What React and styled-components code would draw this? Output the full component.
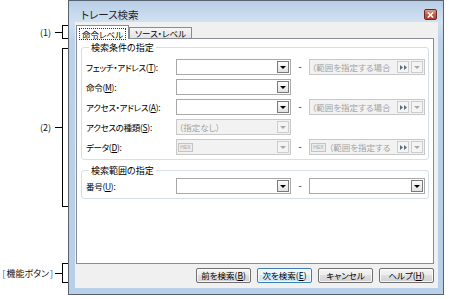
import React from 'react';
import styled, { createGlobalStyle } from 'styled-components';

const GlobalStyle = createGlobalStyle`
  html, body { margin: 0; padding: 0; background: #fff; }
  body {
    font-family: "Noto Sans CJK JP", "Noto Sans", sans-serif;
    font-size: 9px;
    color: #000;
    font-feature-settings: "palt";
  }
`;

const Page = styled.div`
  display: flex;
  align-items: flex-start;
  width: 474px;
  height: 299px;
`;

/* ---- callouts on the left ---- */

const Notes = styled.div`
  width: 68px;
  flex-shrink: 0;
  display: flex;
  flex-direction: column;
`;

const Note = styled.div`
  display: flex;
  align-items: center;
  height: ${({h}) => h}px;
  margin-top: ${({top}) => top}px;
`;

const NoteLabel = styled.span`
  flex: 1;
  text-align: right;
  padding-right: ${({pad}) => pad}px;
  line-height: 1;
  white-space: nowrap;
  color: #111;
`;

const BlueBracket = styled.span`
  color: #1f5fbf;
  margin: 0 1px;
`;

const Stub = styled.span`
  width: 7px;
  height: 1px;
  background: #000;
`;

const Bracket = styled.span`
  align-self: stretch;
  width: 5px;
  border: 1px solid #000;
  border-right: none;
`;

/* ---- dialog window ---- */

const Window = styled.div`
  box-sizing: border-box;
  width: 376px;
  height: 295px;
  border: 1px solid #5a6270;
  background: linear-gradient(to bottom, #b7cde7 0px, #d2e1f1 21px, #bcd2ea 40px, #b8cfe9 100%);
  padding: 0 5px 6px 6px;
  display: flex;
  flex-direction: column;
`;

const TitleBar = styled.div`
  height: 21px;
  box-sizing: border-box;
  padding: 6px 1px 0 6px;
  display: flex;
  align-items: center;
  justify-content: space-between;
`;

const Title = styled.span`
  font-size: 10.5px;
  line-height: 12px;
  color: #1e1e1e;
`;

const CloseButton = styled.span`
  width: 13px;
  height: 11px;
  box-sizing: border-box;
  border: 1px solid #6b2b22;
  border-radius: 2px;
  background: linear-gradient(#e0a08e, #c75a45 50%, #b8402c);
  display: flex;
  align-items: center;
  justify-content: center;
`;

const Client = styled.div`
  flex: 1;
  background: #f0f0f0;
  padding: 3px 4px 0 1px;
  display: flex;
  flex-direction: column;
`;

const TabStrip = styled.div`
  display: flex;
  align-items: flex-end;
  height: 14px;
  margin-bottom: -1px;
  position: relative;
  z-index: 1;
`;

const Tab = styled.div`
  box-sizing: border-box;
  height: ${({active}) => active ? 14 : 12}px;
  padding: ${({active}) => active ? '2px 2px 0' : '0 5px'};
  border: 1px solid #898c95;
  border-bottom: ${({active}) => active ? 'none' : '1px solid #898c95'};
  background: ${({active}) => active ? '#fff' : 'linear-gradient(#f6f6f6, #e3e3e3)'};
  display: flex;
  align-items: ${({active}) => active ? 'flex-start' : 'center'};
  line-height: 10px;
  font-size: 8.5px;
  white-space: nowrap;
`;

const FocusLabel = styled.span`
  border: 1px dotted #333;
  padding: 0 2px;
  height: 10px;
`;

const Panel = styled.div`
  box-sizing: border-box;
  height: 226px;
  border: 1px solid #898c95;
  background: #fff;
  padding: 3px 4px 0 4px;
  display: flex;
  flex-direction: column;
  gap: 5px;
`;

const Group = styled.fieldset`
  margin: 0;
  min-width: 0;
  border: 1px solid #d5dfe5;
  border-radius: 3px;
  padding: ${({pt}) => pt}px 3px 4px 4px;
  display: flex;
  flex-direction: column;
  gap: 4px;
`;

const Legend = styled.legend`
  margin-left: 3px;
  padding: 0 2px;
  line-height: 11px;
  font-size: 9px;
`;

const Row = styled.div`
  display: flex;
  align-items: center;
  height: 16px;
`;

const Label = styled.span`
  width: 90px;
  flex-shrink: 0;
  white-space: nowrap;
  line-height: 16px;
  font-size: 8.5px;
  letter-spacing: -0.3px;
`;

const Dash = styled.span`
  width: 18px;
  text-align: center;
  line-height: 16px;
`;

const Combo = styled.div`
  box-sizing: border-box;
  width: ${({w}) => w}px;
  height: 16px;
  padding: 1px;
  border: 1px solid ${({disabled}) => disabled ? '#c8c8c8' : '#a8a8a8'};
  background: ${({disabled}) => disabled ? '#f2f2f2' : '#fff'};
  display: flex;
  align-items: center;
  gap: 2px;
`;

const ComboText = styled.span`
  flex: 1;
  min-width: 0;
  padding-left: 1px;
  color: ${({disabled}) => disabled ? '#a3a3a3' : '#000'};
  white-space: nowrap;
  font-size: 8.5px;
  line-height: 12px;
`;

const HexBadge = styled.span`
  box-sizing: border-box;
  width: 15px;
  height: 9px;
  border: 1px solid #c4c4c4;
  background: #ececec;
  color: #a8a8a8;
  font-family: "Liberation Sans", sans-serif;
  font-size: 5px;
  line-height: 7px;
  text-align: center;
  flex-shrink: 0;
`;

const SmallButton = styled.span`
  box-sizing: border-box;
  width: 12px;
  height: 12px;
  flex-shrink: 0;
  border: 1px solid ${({disabled}) => disabled ? '#cdcdcd' : '#7a7a7a'};
  background: ${({disabled}) => disabled ? '#f4f4f4' : 'linear-gradient(#fcfcfc, #e2e2e2)'};
  display: flex;
  align-items: center;
  justify-content: center;
`;

const Arrow = styled.span`
  width: 0;
  height: 0;
  border-left: 3px solid transparent;
  border-right: 3px solid transparent;
  border-top: 3px solid ${({disabled}) => disabled ? '#a8a8a8' : '#000'};
`;

const ButtonRow = styled.div`
  display: flex;
  justify-content: flex-end;
  gap: 6px;
  padding-top: 4px;
`;

const Button = styled.button`
  box-sizing: border-box;
  width: 55px;
  height: 15px;
  padding: 0;
  font: inherit;
  font-size: 8.5px;
  line-height: 13px;
  color: #000;
  border: 1px solid ${({focused}) => focused ? '#3c7fb1' : '#707070'};
  border-radius: 2px;
  background: ${({focused}) => focused
    ? 'linear-gradient(#f4fafe, #e6f3fc 50%, #d6ecfa 50%, #cde6f7)'
    : 'linear-gradient(#f4f4f4, #ececec 50%, #dedede 50%, #d2d2d2)'};
  box-shadow: inset 0 0 0 1px rgba(255, 255, 255, 0.75);
`;

const DropArrow = ({disabled}) => (
  <SmallButton disabled={disabled}><Arrow disabled={disabled} /></SmallButton>
);

const RangeIcon = () => (
  <SmallButton disabled>
    <svg width="7" height="5" viewBox="0 0 7 5">
      <path d="M0 0 L3 2.5 L0 5 Z M4 0 L7 2.5 L4 5 Z" fill="#5d6b80" />
    </svg>
  </SmallButton>
);

const ComboBox = ({w, disabled, text, hex, range}) => (
  <Combo w={w} disabled={disabled}>
    {hex && <HexBadge>HEX</HexBadge>}
    <ComboText disabled={disabled}>{text}</ComboText>
    {range && <RangeIcon />}
    <DropArrow disabled={disabled} />
  </Combo>
);

const conditionRows = [
  { label: 'フェッチ・アドレス', key: 'T', left: {}, right: { text: '（範囲を指定する場合' } },
  { label: '命令', key: 'M', left: {} },
  { label: 'アクセス・アドレス', key: 'A', left: {}, right: { text: '（範囲を指定する場合' } },
  { label: 'アクセスの種類', key: 'S', left: { disabled: true, text: '（指定なし）' } },
  { label: 'データ', key: 'D', left: { disabled: true, hex: true }, right: { text: '（範囲を指定する', hex: true } },
];

const FieldRow = ({label, mnemonic, left, right}) => (
  <Row>
    <Label>{label}(<u>{mnemonic}</u>):</Label>
    <ComboBox w={115} {...left} />
    {right && <Dash>-</Dash>}
    {right && (right.plain
      ? <ComboBox w={116} />
      : <ComboBox w={116} disabled range text={right.text} hex={right.hex} />)}
  </Row>
);

export default function App() {
  return (
    <Page>
      <GlobalStyle />
      <Notes>
        <Note top={25} h={14}>
          <NoteLabel pad={4}>(1)</NoteLabel><Stub /><Bracket />
        </Note>
        <Note top={9} h={159}>
          <NoteLabel pad={4}>(2)</NoteLabel><Stub /><Bracket />
        </Note>
        <Note top={56} h={20}>
          <NoteLabel pad={1}><BlueBracket>[</BlueBracket>機能ボタン<BlueBracket>]</BlueBracket></NoteLabel><Stub /><Bracket />
        </Note>
      </Notes>

      <Window>
        <TitleBar>
          <Title>トレース検索</Title>
          <CloseButton>
            <svg width="7" height="6" viewBox="0 0 7 6">
              <path d="M0.8 0.5 L6.2 5.5 M6.2 0.5 L0.8 5.5" stroke="#fff" strokeWidth="1.6" />
            </svg>
          </CloseButton>
        </TitleBar>
        <Client>
          <TabStrip>
            <Tab active><FocusLabel>命令レベル</FocusLabel></Tab>
            <Tab>ソース・レベル</Tab>
          </TabStrip>
          <Panel>
            <Group pt={6}>
              <Legend>検索条件の指定</Legend>
              {conditionRows.map(r => (
                <FieldRow key={r.key} label={r.label} mnemonic={r.key} left={r.left} right={r.right} />
              ))}
            </Group>
            <Group pt={2}>
              <Legend>検索範囲の指定</Legend>
              <FieldRow label="番号" mnemonic="U" left={{}} right={{ plain: true }} />
            </Group>
          </Panel>
          <ButtonRow>
            <Button>前を検索(<u>B</u>)</Button>
            <Button focused>次を検索(<u>E</u>)</Button>
            <Button>キャンセル</Button>
            <Button>ヘルプ(<u>H</u>)</Button>
          </ButtonRow>
        </Client>
      </Window>
    </Page>
  );
}
